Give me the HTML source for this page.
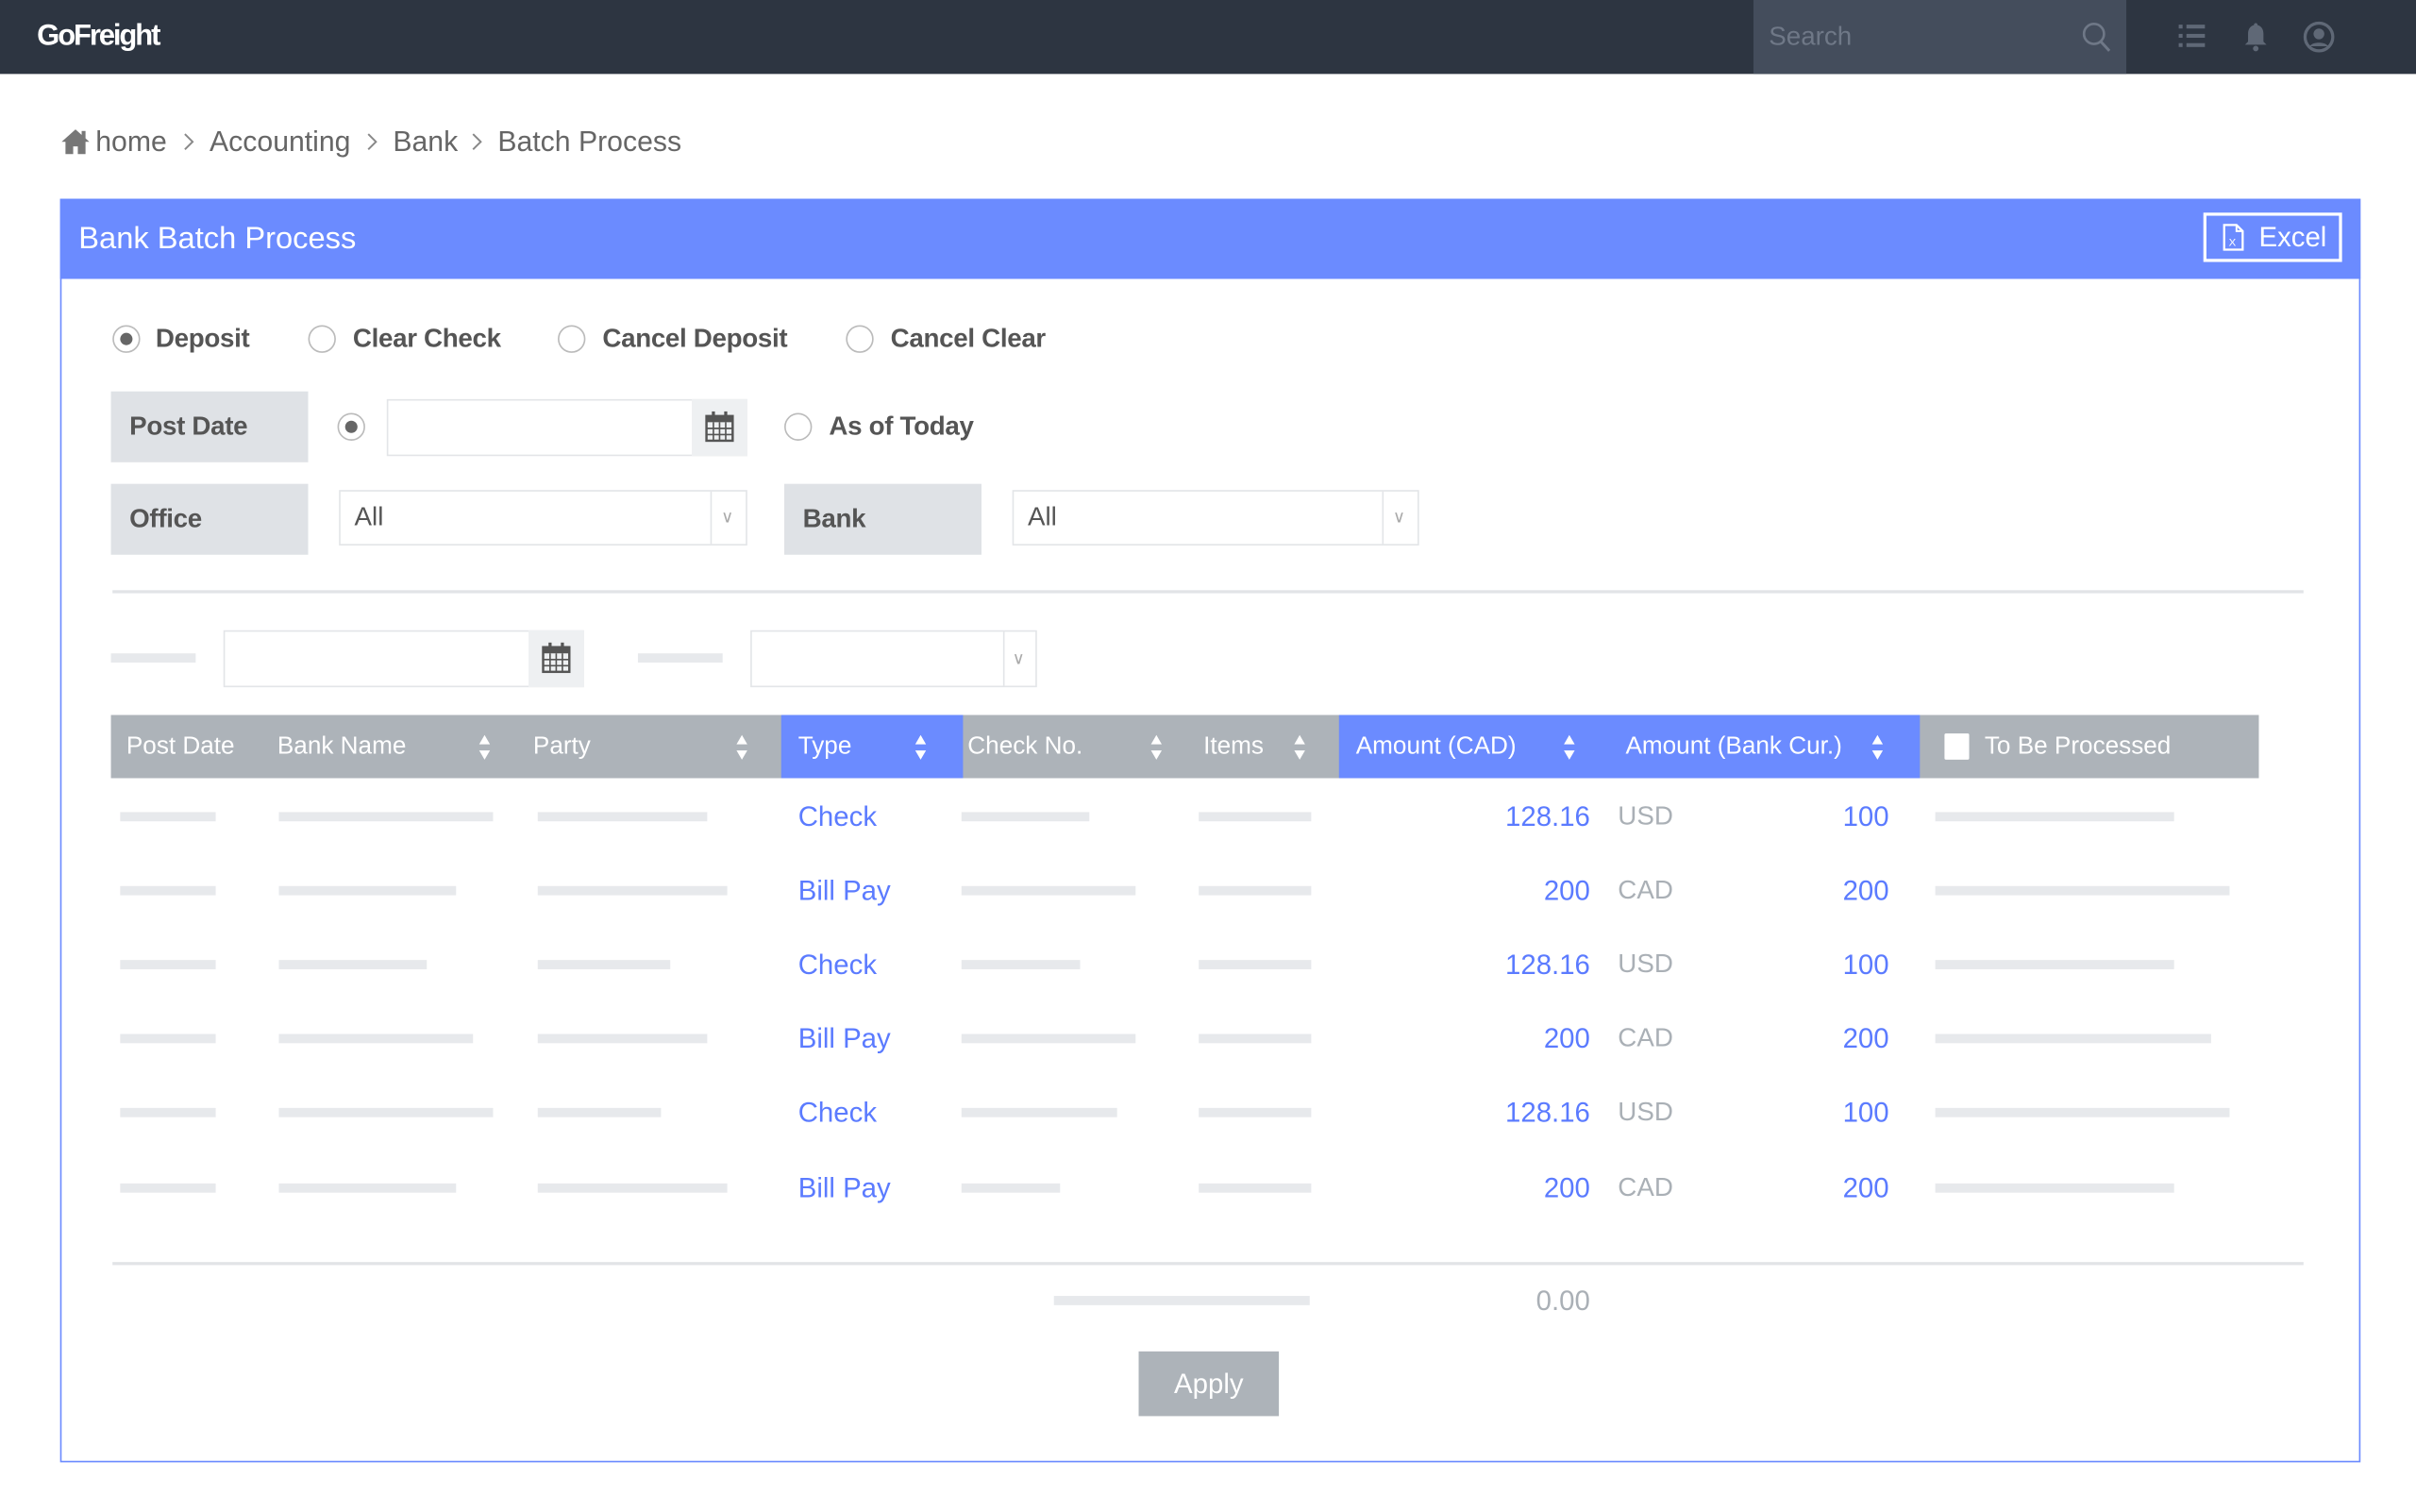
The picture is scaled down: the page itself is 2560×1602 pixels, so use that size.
<!DOCTYPE html>
<html><head><meta charset="utf-8"><style>
html,body{margin:0;padding:0;width:2560px;height:1601px;overflow:hidden;background:#fff}
#w{position:absolute;left:0;top:0;width:1568px;height:981px;transform:scale(1.632653);transform-origin:0 0;font-family:"Liberation Sans",sans-serif}
#w div{position:absolute;box-sizing:border-box}
.t{white-space:nowrap;line-height:20px;height:20px}
.b{height:6px;background:#e7e9ec}
.lb{background:#dfe2e6;color:#555;font-size:17px;line-height:46px;padding-left:12px;font-weight:bold;letter-spacing:-0.2px}
.rl{color:#555;font-size:17px;font-weight:bold;letter-spacing:-0.2px}
.rd{width:18px;height:18px;border:1px solid #bbb;border-radius:50%;background:#fff}
.rd.on::after{content:"";position:absolute;left:4px;top:4px;width:8px;height:8px;border-radius:50%;background:#666}
.in{border:1px solid #e3e5e8;background:#fff}
.hd{color:#fff;font-size:16px}
.bl{color:#5b7bff;font-size:18px}
.gr{color:#aab0b6;font-size:17px}
.bc{color:#666;font-size:18.5px}
</style></head><body><div id="w">
<div style="left:0;top:0;width:1568px;height:48px;background:#2d3541"></div>
<div class="t" style="left:24px;top:12px;color:#fff;font-size:19px;font-weight:bold;letter-spacing:-1.3px;height:24px;line-height:24px">GoFreight</div>
<div style="left:1138px;top:0;width:242px;height:48px;background:#444d5c"></div>
<div class="t" style="left:1148px;top:14px;color:#6f7887;font-size:17px">Search</div>
<svg style="position:absolute;left:1350px;top:13px" width="22" height="22" viewBox="0 0 22 22"><circle cx="9" cy="9" r="6.5" fill="none" stroke="#6f7887" stroke-width="1.6"/><line x1="13.5" y1="14" x2="19" y2="20" stroke="#6f7887" stroke-width="1.8"/></svg>
<svg style="position:absolute;left:1413px;top:15px" width="20" height="18" viewBox="0 0 20 18" fill="#5f6876"><rect x="1" y="1" width="2.5" height="2.5"/><rect x="6" y="1" width="12" height="2.5"/><rect x="1" y="7" width="2.5" height="2.5"/><rect x="6" y="7" width="12" height="2.5"/><rect x="1" y="13" width="2.5" height="2.5"/><rect x="6" y="13" width="12" height="2.5"/></svg>
<svg style="position:absolute;left:1455px;top:14px" width="18" height="20" viewBox="0 0 18 20" fill="#5f6876"><path d="M9 1c1 0 1.2.8 1.2 1.3C13 3 14 5.5 14 8v5l2 2H2l2-2V8c0-2.5 1-5 3.8-5.7C7.8 1.8 8 1 9 1z"/><circle cx="9" cy="17.5" r="1.8"/></svg>
<svg style="position:absolute;left:1494px;top:13px" width="22" height="22" viewBox="0 0 22 22"><circle cx="11" cy="11" r="9" fill="none" stroke="#5f6876" stroke-width="2"/><circle cx="11" cy="9" r="3.5" fill="#5f6876"/><path d="M5 17c2-3 10-3 12 0" fill="#5f6876"/></svg>
<svg style="position:absolute;left:39px;top:83px" width="20" height="18" viewBox="0 0 20 18" fill="#777"><path d="M10 1L1 9h2.5v8h5v-5h3v5h5V9H19z"/><rect x="14" y="2" width="2.5" height="5"/></svg>
<div class="t bc" style="left:62px;top:82px">home</div>
<svg style="position:absolute;left:117px;top:85px" width="10" height="14" viewBox="0 0 10 14"><path d="M3 2l5 5-5 5" fill="none" stroke="#888" stroke-width="1.2"/></svg>
<div class="t bc" style="left:136px;top:82px">Accounting</div>
<svg style="position:absolute;left:236px;top:85px" width="10" height="14" viewBox="0 0 10 14"><path d="M3 2l5 5-5 5" fill="none" stroke="#888" stroke-width="1.2"/></svg>
<div class="t bc" style="left:255px;top:82px">Bank</div>
<svg style="position:absolute;left:304px;top:85px" width="10" height="14" viewBox="0 0 10 14"><path d="M3 2l5 5-5 5" fill="none" stroke="#888" stroke-width="1.2"/></svg>
<div class="t bc" style="left:323px;top:82px">Batch Process</div>
<div style="left:39px;top:129px;width:1493px;height:820px;border:1px solid #6b8bff"></div>
<div style="left:39px;top:129px;width:1493px;height:52px;background:#6b8bff"></div>
<div class="t" style="left:51px;top:144px;color:#fff;font-size:20px;height:22px;line-height:22px">Bank Batch Process</div>
<div style="left:1430px;top:138px;width:90px;height:32px;border:2px solid #fff"></div>
<svg style="position:absolute;left:1442px;top:145px" width="15" height="18" viewBox="0 0 15 18"><path d="M1.5 1h8l4 4v12h-12z" fill="none" stroke="#fff" stroke-width="1.4"/><path d="M9.5 1v4h4" fill="none" stroke="#fff" stroke-width="1.2"/><text x="4.5" y="14.5" font-size="7" fill="#fff" font-family="Liberation Sans">X</text></svg>
<div class="t" style="left:1466px;top:144px;color:#fff;font-size:18px">Excel</div>
<div class="rd on" style="left:73px;top:211px"></div><div class="t rl" style="left:101px;top:210px">Deposit</div>
<div class="rd" style="left:200px;top:211px"></div><div class="t rl" style="left:229px;top:210px">Clear Check</div>
<div class="rd" style="left:362px;top:211px"></div><div class="t rl" style="left:391px;top:210px">Cancel Deposit</div>
<div class="rd" style="left:549px;top:211px"></div><div class="t rl" style="left:578px;top:210px">Cancel Clear</div>
<div class="lb" style="left:72px;top:254px;width:128px;height:46px">Post Date</div>
<div class="rd on" style="left:219px;top:268px"></div>
<div class="in" style="left:251px;top:259px;width:234px;height:37px"></div>
<div style="left:449px;top:259px;width:36px;height:37px;background:#eef0f2"></div>
<svg style="position:absolute;left:457px;top:266px" width="20" height="22" viewBox="0 0 20 22"><rect x="1.5" y="4" width="17" height="16" fill="none" stroke="#555" stroke-width="1.5"/><rect x="1.5" y="4" width="17" height="4" fill="#555"/><rect x="5" y="1" width="2" height="5" fill="#555"/><rect x="13" y="1" width="2" height="5" fill="#555"/><path d="M1.5 12h17M1.5 16h17M6 8v12M10 8v12M14 8v12" stroke="#555" stroke-width="1"/></svg>
<div class="rd" style="left:509px;top:268px"></div><div class="t rl" style="left:538px;top:267px">As of Today</div>
<div class="lb" style="left:72px;top:314px;width:128px;height:46px">Office</div>
<div class="in" style="left:220px;top:318px;width:265px;height:36px"></div>
<div style="left:461px;top:319px;width:1px;height:34px;background:#e3e5e8"></div>
<div class="t" style="left:230px;top:326px;color:#555;font-size:17px">All</div>
<div class="t" style="left:468px;top:326px;color:#aaa;font-size:11px">&#x2228;</div>
<div class="lb" style="left:509px;top:314px;width:128px;height:46px">Bank</div>
<div class="in" style="left:657px;top:318px;width:264px;height:36px"></div>
<div style="left:897px;top:319px;width:1px;height:34px;background:#e3e5e8"></div>
<div class="t" style="left:667px;top:326px;color:#555;font-size:17px">All</div>
<div class="t" style="left:904px;top:326px;color:#aaa;font-size:11px">&#x2228;</div>
<div style="left:73px;top:383px;width:1422px;height:2px;background:#e2e4e7"></div>
<div class="b" style="left:72px;top:424px;width:55px"></div>
<div class="in" style="left:145px;top:409px;width:234px;height:37px"></div>
<div style="left:343px;top:409px;width:36px;height:37px;background:#eef0f2"></div>
<svg style="position:absolute;left:351px;top:416px" width="20" height="22" viewBox="0 0 20 22"><rect x="1.5" y="4" width="17" height="16" fill="none" stroke="#555" stroke-width="1.5"/><rect x="1.5" y="4" width="17" height="4" fill="#555"/><rect x="5" y="1" width="2" height="5" fill="#555"/><rect x="13" y="1" width="2" height="5" fill="#555"/><path d="M1.5 12h17M1.5 16h17M6 8v12M10 8v12M14 8v12" stroke="#555" stroke-width="1"/></svg>
<div class="b" style="left:414px;top:424px;width:55px"></div>
<div class="in" style="left:487px;top:409px;width:186px;height:37px"></div>
<div style="left:651px;top:410px;width:1px;height:35px;background:#e3e5e8"></div>
<div class="t" style="left:657px;top:418px;color:#aaa;font-size:11px">&#x2228;</div>
<div style="left:72px;top:464px;width:1394px;height:41px;background:#adb3b9"></div>
<div style="left:507px;top:464px;width:118px;height:41px;background:#6b8bff"></div>
<div style="left:869px;top:464px;width:377px;height:41px;background:#6b8bff"></div>
<div class="t hd" style="left:82px;top:475px">Post Date</div>
<div class="t hd" style="left:180px;top:475px">Bank Name</div>
<div class="t hd" style="left:346px;top:475px">Party</div>
<div class="t hd" style="left:518px;top:475px">Type</div>
<div class="t hd" style="left:628px;top:475px">Check No.</div>
<div class="t hd" style="left:781px;top:475px">Items</div>
<div class="t hd" style="left:880px;top:475px">Amount (CAD)</div>
<div class="t hd" style="left:1055px;top:475px">Amount (Bank Cur.)</div>
<div style="left:1262px;top:476px;width:16px;height:17px;background:#fff;border-radius:1px"></div>
<div class="t hd" style="left:1288px;top:475px">To Be Processed</div>
<svg style="position:absolute;left:310px;top:476px" width="9" height="18" viewBox="0 0 9 18" fill="#fff"><path d="M4.5 1L8 7H1zM4.5 17L8 11H1z"/></svg>
<svg style="position:absolute;left:477px;top:476px" width="9" height="18" viewBox="0 0 9 18" fill="#fff"><path d="M4.5 1L8 7H1zM4.5 17L8 11H1z"/></svg>
<svg style="position:absolute;left:593px;top:476px" width="9" height="18" viewBox="0 0 9 18" fill="#fff"><path d="M4.5 1L8 7H1zM4.5 17L8 11H1z"/></svg>
<svg style="position:absolute;left:746px;top:476px" width="9" height="18" viewBox="0 0 9 18" fill="#fff"><path d="M4.5 1L8 7H1zM4.5 17L8 11H1z"/></svg>
<svg style="position:absolute;left:839px;top:476px" width="9" height="18" viewBox="0 0 9 18" fill="#fff"><path d="M4.5 1L8 7H1zM4.5 17L8 11H1z"/></svg>
<svg style="position:absolute;left:1014px;top:476px" width="9" height="18" viewBox="0 0 9 18" fill="#fff"><path d="M4.5 1L8 7H1zM4.5 17L8 11H1z"/></svg>
<svg style="position:absolute;left:1214px;top:476px" width="9" height="18" viewBox="0 0 9 18" fill="#fff"><path d="M4.5 1L8 7H1zM4.5 17L8 11H1z"/></svg>
<div class="b" style="left:78px;top:527px;width:62px"></div><div class="b" style="left:181px;top:527px;width:139px"></div><div class="b" style="left:349px;top:527px;width:110px"></div>
<div class="t bl" style="left:518px;top:520px">Check</div>
<div class="b" style="left:624px;top:527px;width:83px"></div><div class="b" style="left:778px;top:527px;width:73px"></div>
<div class="t bl" style="left:932px;top:520px;width:100px;text-align:right">128.16</div><div class="t gr" style="left:1050px;top:520px">USD</div><div class="t bl" style="left:1126px;top:520px;width:100px;text-align:right">100</div>
<div class="b" style="left:1256px;top:527px;width:155px"></div>
<div class="b" style="left:78px;top:575px;width:62px"></div><div class="b" style="left:181px;top:575px;width:115px"></div><div class="b" style="left:349px;top:575px;width:123px"></div>
<div class="t bl" style="left:518px;top:568px">Bill Pay</div>
<div class="b" style="left:624px;top:575px;width:113px"></div><div class="b" style="left:778px;top:575px;width:73px"></div>
<div class="t bl" style="left:932px;top:568px;width:100px;text-align:right">200</div><div class="t gr" style="left:1050px;top:568px">CAD</div><div class="t bl" style="left:1126px;top:568px;width:100px;text-align:right">200</div>
<div class="b" style="left:1256px;top:575px;width:191px"></div>
<div class="b" style="left:78px;top:623px;width:62px"></div><div class="b" style="left:181px;top:623px;width:96px"></div><div class="b" style="left:349px;top:623px;width:86px"></div>
<div class="t bl" style="left:518px;top:616px">Check</div>
<div class="b" style="left:624px;top:623px;width:77px"></div><div class="b" style="left:778px;top:623px;width:73px"></div>
<div class="t bl" style="left:932px;top:616px;width:100px;text-align:right">128.16</div><div class="t gr" style="left:1050px;top:616px">USD</div><div class="t bl" style="left:1126px;top:616px;width:100px;text-align:right">100</div>
<div class="b" style="left:1256px;top:623px;width:155px"></div>
<div class="b" style="left:78px;top:671px;width:62px"></div><div class="b" style="left:181px;top:671px;width:126px"></div><div class="b" style="left:349px;top:671px;width:110px"></div>
<div class="t bl" style="left:518px;top:664px">Bill Pay</div>
<div class="b" style="left:624px;top:671px;width:113px"></div><div class="b" style="left:778px;top:671px;width:73px"></div>
<div class="t bl" style="left:932px;top:664px;width:100px;text-align:right">200</div><div class="t gr" style="left:1050px;top:664px">CAD</div><div class="t bl" style="left:1126px;top:664px;width:100px;text-align:right">200</div>
<div class="b" style="left:1256px;top:671px;width:179px"></div>
<div class="b" style="left:78px;top:719px;width:62px"></div><div class="b" style="left:181px;top:719px;width:139px"></div><div class="b" style="left:349px;top:719px;width:80px"></div>
<div class="t bl" style="left:518px;top:712px">Check</div>
<div class="b" style="left:624px;top:719px;width:101px"></div><div class="b" style="left:778px;top:719px;width:73px"></div>
<div class="t bl" style="left:932px;top:712px;width:100px;text-align:right">128.16</div><div class="t gr" style="left:1050px;top:712px">USD</div><div class="t bl" style="left:1126px;top:712px;width:100px;text-align:right">100</div>
<div class="b" style="left:1256px;top:719px;width:191px"></div>
<div class="b" style="left:78px;top:768px;width:62px"></div><div class="b" style="left:181px;top:768px;width:115px"></div><div class="b" style="left:349px;top:768px;width:123px"></div>
<div class="t bl" style="left:518px;top:761px">Bill Pay</div>
<div class="b" style="left:624px;top:768px;width:64px"></div><div class="b" style="left:778px;top:768px;width:73px"></div>
<div class="t bl" style="left:932px;top:761px;width:100px;text-align:right">200</div><div class="t gr" style="left:1050px;top:761px">CAD</div><div class="t bl" style="left:1126px;top:761px;width:100px;text-align:right">200</div>
<div class="b" style="left:1256px;top:768px;width:155px"></div>
<div style="left:73px;top:819px;width:1422px;height:2px;background:#e2e4e7"></div>
<div class="b" style="left:684px;top:841px;width:166px"></div>
<div class="t gr" style="left:932px;top:834px;width:100px;text-align:right;font-size:18px">0.00</div>
<div style="left:739px;top:877px;width:91px;height:42px;background:#adb3b9"></div>
<div class="t" style="left:739px;top:888px;width:91px;text-align:center;color:#fff;font-size:18px">Apply</div>
</div></body></html>
